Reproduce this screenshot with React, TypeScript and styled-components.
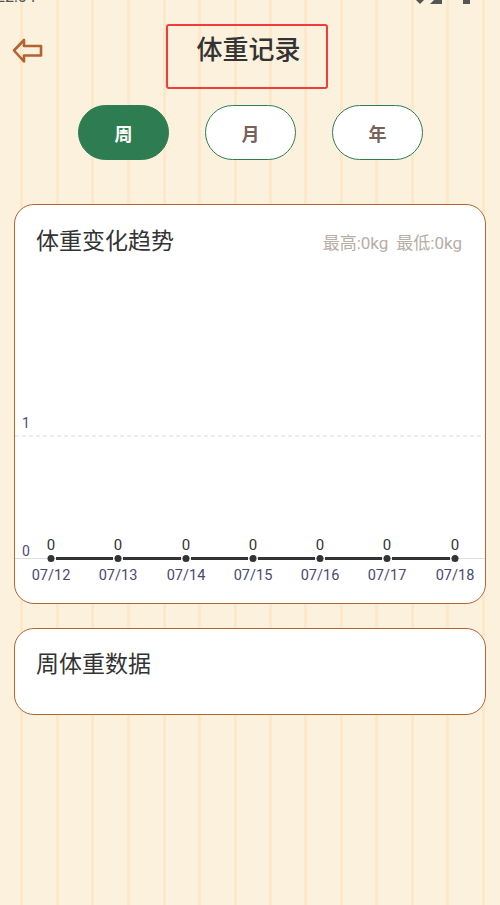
import React from 'react';
import styled, { createGlobalStyle } from 'styled-components';

const GlobalStyle = createGlobalStyle`
  html, body {
    margin: 0;
    padding: 0;
  }
  body {
    font-family: Roboto, "Noto Sans CJK SC", sans-serif;
    color: #333333;
  }
`;

const Page = styled.div`
  width: 500px;
  min-height: 905px;
  box-sizing: border-box;
  background-color: #fbf1dc;
  background-image: repeating-linear-gradient(
    90deg,
    transparent 0,
    transparent 20.5px,
    #fde8c9 20.5px,
    #fde8c9 23.5px,
    transparent 23.5px,
    transparent 35.5px
  );
  overflow: hidden;
`;

const StatusBar = styled.div`
  display: flex;
  justify-content: space-between;
  align-items: flex-end;
  height: 4px;
  padding: 0 28px 0 0;
  overflow: hidden;
  color: #555;
`;

const Clock = styled.span`
  font-size: 16px;
  line-height: 1;
  margin-left: -4px;
  margin-bottom: -1px;
`;

const Header = styled.div`
  display: grid;
  grid-template-columns: 1fr auto 1fr;
  align-items: start;
  margin-top: 20px;
  padding: 0 12px;
`;

const BackButton = styled.button`
  justify-self: start;
  margin-top: 13px;
  padding: 0;
  border: none;
  background: none;
  width: 32px;
  height: 28px;
  cursor: pointer;
`;

const TitleBox = styled.div`
  width: 162px;
  height: 65px;
  box-sizing: border-box;
  border: 2px solid #f23b3b;
  border-radius: 3px;
  padding-top: 11px;
  padding-left: 3px;
  margin-left: -6px;
  text-align: center;
  font-size: 26px;
  line-height: 26px;
  font-weight: 500;
  color: #333;
`;

const Tabs = styled.div`
  display: flex;
  justify-content: center;
  gap: 36px;
  margin-top: 16px;
  padding-left: 1px;
`;

const Tab = styled.button<{ $active?: boolean }>`
  width: 91px;
  height: 55px;
  box-sizing: border-box;
  border-radius: 28px;
  border: 1.5px solid #2e7d52;
  background: ${(p) => (p.$active ? '#2e7d52' : '#ffffff')};
  color: ${(p) => (p.$active ? '#ffffff' : '#7a625c')};
  font-family: Roboto, "Noto Sans CJK SC", sans-serif;
  font-size: 18px;
  font-weight: 700;
  cursor: pointer;
`;

const Card = styled.div`
  margin: 0 14px;
  box-sizing: border-box;
  background: #ffffff;
  border: 1px solid #b4652f;
  border-radius: 20px;
`;

const TrendCard = styled(Card)`
  margin-top: 44px;
  height: 400px;
  padding-top: 24px;
`;

const DataCard = styled(Card)`
  margin-top: 24px;
  height: 87px;
  padding: 24px 21px 0;
`;

const CardHead = styled.div`
  display: flex;
  justify-content: space-between;
  align-items: center;
  padding: 0 23px 0 21px;
`;

const CardTitle = styled.div`
  font-size: 23px;
  line-height: 23px;
  color: #333;
`;

const Extremes = styled.div`
  display: flex;
  gap: 8px;
  font-size: 17px;
  color: #b7aea7;
`;

const Chart = styled.svg`
  display: block;
  margin-top: 3px;
`;

const days = ['07/12', '07/13', '07/14', '07/15', '07/16', '07/17', '07/18'];
const xs = [51, 118, 186, 253, 320, 387, 455];

const WeightChart: React.FC = () => (
  <Chart width={470} height={338} viewBox="15 255 470 338">
    <text x={22} y={426} fontSize={14} fill="#4d4a78">
      1
    </text>
    <line x1={15} y1={434} x2={485} y2={434} stroke="#d9d9d9" strokeWidth={1} strokeDasharray="4 3" />
    <text x={22} y={554} fontSize={14} fill="#4d4a78">
      0
    </text>
    <line x1={15} y1={556.5} x2={485} y2={556.5} stroke="#dddddd" strokeWidth={1} />
    {xs.slice(1).map((x, i) => (
      <line key={x} x1={xs[i] + 5} y1={556.5} x2={x - 5} y2={556.5} stroke="#333333" strokeWidth={3} />
    ))}
    {xs.map((x, i) => (
      <g key={days[i]}>
        <circle cx={x} cy={556.5} r={3.5} fill="#333333" />
        <text x={x} y={548} fontSize={15} fill="#333333" textAnchor="middle">
          0
        </text>
        <text x={x} y={578} fontSize={14.5} fill="#4a4870" textAnchor="middle">
          {days[i]}
        </text>
      </g>
    ))}
  </Chart>
);

const BackArrow: React.FC = () => (
  <svg width="32" height="28" viewBox="0 0 32 28">
    <path
      d="M2 13.5 L12 3 L12 9 L29 9 L29 18.5 L12 18.5 L12 24.5 Z"
      fill="none"
      stroke="#b4622f"
      strokeWidth={2.6}
      strokeLinejoin="round"
    />
  </svg>
);

const StatusIcons: React.FC = () => (
  <svg width="56" height="4" viewBox="0 0 56 4">
    <path d="M0 0 L8 0 L4 4 Z" fill="#555" />
    <path d="M14 4 L26 4 L26 0 L18 0 Z" fill="#555" />
    <rect x="47" y="0" width="7" height="4" fill="#555" />
  </svg>
);

export default function App() {
  return (
    <Page>
      <GlobalStyle />
      <StatusBar>
        <Clock>22:04</Clock>
        <StatusIcons />
      </StatusBar>
      <Header>
        <BackButton aria-label="返回">
          <BackArrow />
        </BackButton>
        <TitleBox>体重记录</TitleBox>
        <div />
      </Header>
      <Tabs>
        <Tab $active>周</Tab>
        <Tab>月</Tab>
        <Tab>年</Tab>
      </Tabs>
      <TrendCard>
        <CardHead>
          <CardTitle>体重变化趋势</CardTitle>
          <Extremes>
            <span>最高:0kg</span>
            <span>最低:0kg</span>
          </Extremes>
        </CardHead>
        <WeightChart />
      </TrendCard>
      <DataCard>
        <CardTitle>周体重数据</CardTitle>
      </DataCard>
    </Page>
  );
}
